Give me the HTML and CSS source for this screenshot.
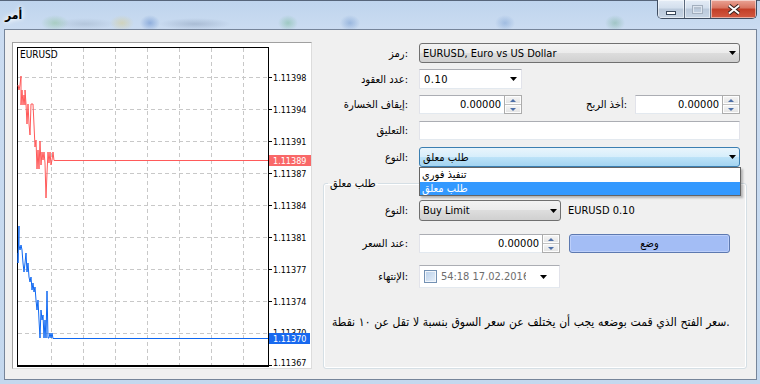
FILE: index.html
```html
<!DOCTYPE html>
<html lang="ar">
<head>
    <meta charset="UTF-8">
    <title>أمر</title>
    <link rel="stylesheet" href="styles.css">
</head>
<body>
<div class="window">
    <div class="titlebar">
        <span class="title">أمر</span>
        <div class="caption-buttons">
            <span class="cbtn min"><i></i></span>
            <span class="cbtn max"><i></i></span>
            <span class="cbtn close">
                <svg width="14" height="11" viewBox="0 0 14 11">
                    <path d="M2 1.5L12 9.5M12 1.5L2 9.5" stroke="#3a2420" stroke-width="4"/>
                    <path d="M2 1.5L12 9.5M12 1.5L2 9.5" stroke="#fff" stroke-width="2"/>
                </svg>
            </span>
        </div>
    </div>

    <div class="client">
        <div class="chart-panel">
            <svg class="chart" width="298" height="325" viewBox="13 43 298 325">
                <path class="grid" d="M51.5 48V365M83.5 48V365M115.5 48V365M147.5 48V365M179.5 48V365M211.5 48V365M243.5 48V365
                    M18 77.5H268M18 109.5H268M18 141.5H268M18 173.5H268M18 205.5H268M18 237.5H268M18 269.5H268M18 301.5H268M18 333.5H268"/>
                <path class="ticks" d="M268 77.5H272M268 109.5H272M268 141.5H272M268 173.5H272M268 205.5H272M268 237.5H272M268 269.5H272M268 301.5H272M268 333.5H272M268 365.5H272"/>
                <rect class="frame" x="17.5" y="47.5" width="251" height="318"/>
                <path class="frame" d="M17 366.5H269"/>
                <text class="sym" x="20" y="58">EURUSD</text>

                <g class="scale">
                    <text x="273" y="81">1.11398</text>
                    <text x="273" y="113">1.11394</text>
                    <text x="273" y="145">1.11391</text>
                    <text x="273" y="177">1.11387</text>
                    <text x="273" y="209">1.11384</text>
                    <text x="273" y="241">1.11381</text>
                    <text x="273" y="273">1.11377</text>
                    <text x="273" y="305">1.11374</text>
                    <text x="273" y="336">1.11370</text>
                    <text x="273" y="366">1.11367</text>
                </g>

                <polyline class="ask" points="18,85 19,90 20,85 21,76 21,105 22,90 23,105 24,95 25,105 25,90 26,104 27,124 28,104 29,124 30,135 31,104 33,104 34,125 35,147 36,140 37,169 38,150 39,169 40,141 41,165 42,152 43,160 44,152 45,163 46,198 47,173 48,152 49,163 50,152 51,165 52,160 53,152 54,160.5 268,160.5"/>
                <polyline class="bid" points="18,253 18,263 19,226 19,245 20,250 21,245 22,250 23,263 24,272 25,263 26,253 27,272 28,263 29,277 30,282 31,277 32,290 33,283 34,292 35,287 36,300 37,310 38,300 39,320 40,338 41,310 42,320 43,315 44,338 45,320 46,338 47,291 48,338 49,338 50,333 51,338 52,333 53,338.5 268,338.5"/>

                <rect class="ask-tag" x="269" y="155" width="42" height="11"/>
                <text class="tag-text" x="273" y="164">1.11389</text>
                <rect class="bid-tag" x="269" y="333" width="41" height="11"/>
                <text class="tag-text" x="273" y="342">1.11370</text>
            </svg>
        </div>

        <div class="form">
            <div class="row r-symbol">
                <span class="lbl">رمز:</span>
                <div class="combo">
                    <span>EURUSD, Euro vs US Dollar</span>
                    <svg class="arrow" width="7" height="4"><path d="M0 0h7L3.5 4z"/></svg>
                </div>
            </div>

            <div class="row">
                <span class="lbl">عدد العقود:</span>
                <div class="edit volume">
                    <span class="mono">0.10</span>
                    <svg class="arrow" width="7" height="4"><path d="M0 0h7L3.5 4z"/></svg>
                </div>
            </div>

            <div class="row r-stops">
                <span class="lbl">إيقاف الخسارة:</span>
                <div class="pair">
                    <div class="edit spin-field sl">
                        <span class="num">0.00000</span>
                        <span class="spinner"><b class="up"></b><b class="down"></b></span>
                    </div>
                    <span class="lbl tp-lbl">أخذ الربح:</span>
                    <div class="edit spin-field tp">
                        <span class="num">0.00000</span>
                        <span class="spinner"><b class="up"></b><b class="down"></b></span>
                    </div>
                </div>
            </div>

            <div class="row r-comment">
                <span class="lbl">التعليق:</span>
                <div class="edit comment"></div>
            </div>

            <div class="row r-type">
                <span class="lbl">النوع:</span>
                <div class="drop">
                    <div class="combo focused">
                        <span>طلب معلق</span>
                        <svg class="arrow" width="7" height="4"><path d="M0 0h7L3.5 4z"/></svg>
                    </div>
                    <ul class="drop-list">
                        <li>تنفيذ فوري</li>
                        <li class="selected">طلب معلق</li>
                    </ul>
                </div>
            </div>

            <fieldset class="pending">
                <legend>طلب معلق</legend>

                <div class="prow r-kind">
                    <span class="lbl">النوع:</span>
                    <div class="pair">
                        <div class="combo kind">
                            <span>Buy Limit</span>
                            <svg class="arrow" width="7" height="4"><path d="M0 0h7L3.5 4z"/></svg>
                        </div>
                        <span class="info">EURUSD 0.10</span>
                    </div>
                </div>

                <div class="prow r-price">
                    <span class="lbl">عند السعر:</span>
                    <div class="pair">
                        <div class="edit spin-field price">
                            <span class="num">0.00000</span>
                            <span class="spinner"><b class="up"></b><b class="down"></b></span>
                        </div>
                        <button class="place">وضع</button>
                    </div>
                </div>

                <div class="prow r-expiry">
                    <span class="lbl">الإنتهاء:</span>
                    <div class="edit expiry">
                        <span class="check"></span>
                        <span class="date">54:18 17.02.2016</span>
                        <svg class="arrow" width="7" height="4"><path d="M0 0h7L3.5 4z"/></svg>
                    </div>
                </div>

                <p class="note">سعر الفتح الذي قمت بوضعه يجب أن يختلف عن سعر السوق بنسبة لا تقل عن ١٠ نقطة.</p>
            </fieldset>
        </div>
    </div>
</div>
</body>
</html>
```

FILE: styles.css
```css
body {
    margin: 0;
    width: 760px;
    height: 384px;
    overflow: hidden;
    font-family: "DejaVu Sans Condensed", "DejaVu Sans", sans-serif;
    font-size: 11px;
    line-height: 13px;
    color: #000;
    background: linear-gradient(#bed4ed, #cbdcf1 30px, #c4d8ee);
}

.window {
    height: 384px;
    box-sizing: border-box;
    border-top: 1px solid #56657a;
}

/* title bar */
.titlebar {
    height: 28px;
    display: flex;
    justify-content: space-between;
    padding: 0 3px 0 5px;
    background:
        radial-gradient(ellipse 14px 8px at 55px 22px, rgba(110, 180, 110, 0.35), transparent),
        radial-gradient(ellipse 30px 6px at 85px 23px, rgba(120, 140, 160, 0.25), transparent),
        radial-gradient(ellipse 12px 8px at 122px 22px, rgba(220, 200, 110, 0.4), transparent),
        radial-gradient(ellipse 10px 8px at 150px 22px, rgba(60, 110, 190, 0.4), transparent),
        radial-gradient(ellipse 36px 6px at 195px 23px, rgba(100, 120, 150, 0.3), transparent),
        radial-gradient(ellipse 10px 8px at 288px 22px, rgba(80, 170, 110, 0.35), transparent),
        radial-gradient(ellipse 10px 8px at 350px 22px, rgba(70, 120, 190, 0.35), transparent),
        radial-gradient(ellipse 10px 8px at 505px 22px, rgba(70, 120, 190, 0.3), transparent),
        radial-gradient(ellipse 10px 8px at 615px 22px, rgba(70, 150, 100, 0.3), transparent);
}

.title {
    font-size: 12px;
    font-weight: bold;
    line-height: 28px;
    text-shadow: 0 0 4px #fff, 0 0 6px #fff;
}

.caption-buttons {
    display: flex;
    height: 19px;
    margin-top: -1px;
    border: 1px solid #3f4d61;
    border-top: 0;
    border-radius: 0 0 5px 5px;
    overflow: hidden;
    box-sizing: border-box;
}

.cbtn {
    display: flex;
    align-items: center;
    justify-content: center;
    height: 18px;
    box-shadow: inset 0 0 0 1px rgba(255, 255, 255, 0.5);
}

.cbtn + .cbtn {
    border-left: 1px solid #5b697c;
}

.min, .max {
    background: linear-gradient(#e4ecf6, #d3dfed 45%, #bac9db 50%, #c8d5e5);
}

.min {
    width: 26px;
}

.min i {
    display: block;
    width: 8px;
    height: 2px;
    margin-top: 7px;
    background: #fff;
    border: 1px solid #39475a;
}

.max {
    width: 25px;
}

.max i {
    display: block;
    width: 9px;
    height: 7px;
    border: 1px solid #a3afbe;
    box-shadow: inset 0 0 0 1px #dde5ef, inset 0 2px 0 1px #b5c1cf;
}

.close {
    width: 45px;
    background: linear-gradient(#eaa496, #d8735f 45%, #c23e27 50%, #d35a42);
}

/* client area */
.client {
    height: 351px;
    margin: 0 3px 0 4px;
    box-sizing: border-box;
    border: 1px solid #76859a;
    background: #f0f0f0;
    display: flex;
    align-items: flex-start;
    padding: 12px 0 0 7px;
}

.chart-panel {
    width: 300px;
    height: 327px;
    box-sizing: border-box;
    border: 1px solid #a0a0a0;
    border-right-color: #dcdcdc;
    border-bottom-color: #dcdcdc;
    background: #fff;
}

.chart {
    display: block;
    font-family: "DejaVu Sans Condensed", "DejaVu Sans", sans-serif;
    font-size: 9px;
}

.chart .grid {
    fill: none;
    stroke: #c8c8c8;
    stroke-dasharray: 4 3;
}

.chart .ticks, .chart .frame {
    fill: none;
    stroke: #000;
}

.chart .scale text, .chart .sym {
    fill: #000;
}

.chart .sym {
    font-size: 10px;
}

.chart .ask {
    fill: none;
    stroke: #ff5a5a;
}

.chart .bid {
    fill: none;
    stroke: #0f68f2;
}

.chart .ask-tag {
    fill: #f96868;
}

.chart .bid-tag {
    fill: #1869ef;
}

.chart .tag-text {
    fill: #fff;
}

/* order form */
.form {
    width: 424px;
    margin-left: 11px;
    padding-top: 1px;
}

.row {
    display: grid;
    grid-template-columns: 85px 321px;
    column-gap: 11px;
    align-items: center;
    height: 20px;
    margin-top: 6px;
}

.row:first-child {
    margin-top: 0;
}

.r-stops, .r-comment {
    height: 19px;
}

.r-comment, .r-type {
    margin-top: 7px;
}

.lbl {
    text-align: right;
    white-space: nowrap;
}

.combo {
    display: flex;
    align-items: center;
    justify-content: space-between;
    height: 20px;
    box-sizing: border-box;
    padding: 0 3px 0 3px;
    border: 1px solid #707070;
    border-radius: 3px;
    background: linear-gradient(#f3f3f3, #ebebeb 50%, #dddddd 50%, #d0d0d0);
}

.combo.focused {
    border-color: #3c7fb1;
    background: linear-gradient(#e9f5fc, #d6eefb 50%, #bde3f8 50%, #a3d4f1);
}

.edit {
    height: 100%;
    box-sizing: border-box;
    border: 1px solid;
    border-color: #abadb3 #e2e3ea #e3e9ef #e2e3ea;
    background: #fff;
    display: flex;
    align-items: center;
}

.volume {
    width: 103px;
    justify-content: space-between;
    padding: 0 4px 0 4px;
}

.mono {
    letter-spacing: 0.5px;
}

.pair {
    display: flex;
    align-items: center;
    height: 100%;
}

.spin-field {
    width: 103px;
    justify-content: flex-end;
    padding: 0;
}

.spin-field .num {
    padding-right: 3px;
}

.spinner {
    display: flex;
    flex-direction: column;
    width: 18px;
    height: 19px;
    margin: -1px -1px -1px 0;
    box-sizing: border-box;
    border: 1px solid #acacac;
}

.spinner b {
    flex: 1;
    position: relative;
    background: linear-gradient(#f6f6f6, #e2e2e2);
    box-shadow: inset 0 0 0 1px #fdfdfd;
}

.spinner b + b {
    border-top: 1px solid #c2c2c2;
}

.spinner b::after {
    content: "";
    position: absolute;
    left: 5px;
    top: 3px;
    border-left: 3px solid transparent;
    border-right: 3px solid transparent;
}

.spinner .up::after {
    border-bottom: 3px solid #4d6fa8;
}

.spinner .down::after {
    border-top: 3px solid #4d6fa8;
}

.tp-lbl {
    flex: 1;
    padding-right: 8px;
}

.tp {
    width: 105px;
}

.comment {
    width: 321px;
}

.drop {
    position: relative;
}

.drop-list {
    position: absolute;
    top: 20px;
    left: 0;
    width: 322px;
    margin: 0;
    padding: 0;
    list-style: none;
    box-sizing: border-box;
    border: 1px solid #646464;
    background: #fff;
    box-shadow: 2px 2px 2px rgba(0, 0, 0, 0.25);
    z-index: 2;
}

.drop-list li {
    height: 14px;
    padding-left: 2px;
    text-align: left;
}

.drop-list li.selected {
    height: 13px;
    background: #3399ff;
    color: #fff;
}

/* pending order group */
.pending {
    width: 424px;
    height: 192px;
    box-sizing: border-box;
    margin: 10px 0 0;
    padding: 0;
    border: 1px solid #d5dfe5;
    border-radius: 3px;
    box-shadow: inset 0 0 0 1px #fff;
}

.pending legend {
    margin-left: 4px;
    padding: 0 2px;
}

.prow {
    display: grid;
    grid-template-columns: 84px 321px;
    column-gap: 11px;
    align-items: center;
}

.r-kind {
    height: 21px;
    margin-top: 10px;
}

.r-price {
    height: 19px;
    margin-top: 13px;
}

.r-expiry {
    height: 23px;
    margin-top: 12px;
}

.kind {
    width: 142px;
    height: 21px;
}

.info {
    margin-left: 7px;
}

.price {
    width: 141px;
}

.place {
    width: 161px;
    height: 19px;
    margin-left: 9px;
    padding: 0;
    font: inherit;
    color: #000;
    border: 1px solid #5d79b0;
    border-radius: 3px;
    background: #a3bdf5;
    box-shadow: inset 0 0 0 1px #bccffa;
}

.expiry {
    width: 141px;
    padding: 0 12px 0 4px;
}

.check {
    width: 13px;
    height: 13px;
    box-sizing: border-box;
    border: 1px solid #7391b3;
    background: linear-gradient(135deg, #b8cfe9, #e6f0fa);
    box-shadow: inset 0 0 0 1px #f2f6fb;
}

.date {
    width: 86px;
    margin: 0 14px 0 4px;
    overflow: hidden;
    white-space: nowrap;
    color: #6d6d6d;
}

.note {
    margin: 28px 0 0 8px;
    font-size: 12px;
    letter-spacing: 0.1px;
    word-spacing: 0.3px;
    white-space: nowrap;
}
```
